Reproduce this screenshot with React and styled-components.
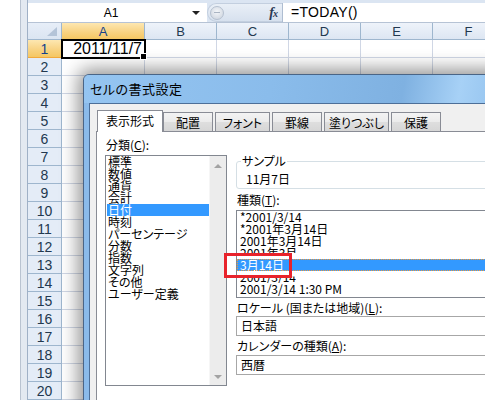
import { Fragment } from 'react';
import styled, { createGlobalStyle, css } from 'styled-components';

const UI_FONT = `"Noto Sans CJK JP", "Liberation Sans", sans-serif`;

const GlobalStyle = createGlobalStyle`
  html, body { margin: 0; padding: 0; background: #fff; }
  body {
    width: 485px;
    height: 410px;
    overflow: hidden;
    font-family: "Liberation Sans", Arial, sans-serif;
  }
  * { box-sizing: border-box; }
`;

const Screen = styled.div`
  position: relative;
  display: flex;
  width: 485px;
  height: 400px;
  overflow: hidden;
`;

const WindowEdge = styled.div`
  flex: none;
  width: 28px;
  background: linear-gradient(
    to right,
    #ffffff 0 20px,
    #b9c3d1 20px 21px,
    #e3e9f1 21px 27px,
    #9fb0c6 27px 28px
  );
`;

const Workbook = styled.div`
  flex: 1;
  min-width: 0;
  display: flex;
  flex-direction: column;
`;

/* formula bar */
const FormulaBar = styled.div`
  display: flex;
  height: 22px;
  padding-top: 3px;
  background: #dbe5f2;
`;

const NameBox = styled.div`
  width: 179px;
  display: flex;
  align-items: center;
  background: #fff;
  padding-right: 7px;
`;

const NameText = styled.span`
  flex: 1;
  text-align: center;
  font-size: 12px;
  color: #000;
  padding-left: 2px;
`;

const DropArrow = styled.span`
  width: 0;
  height: 0;
  border-left: 4px solid transparent;
  border-right: 4px solid transparent;
  border-top: 4px solid #222;
`;

const FxArea = styled.div`
  width: 75px;
  display: flex;
  align-items: center;
  justify-content: space-between;
  padding: 0 5px 0 2px;
  border-radius: 10px 0 0 10px;
  background: linear-gradient(#e9eff7, #d7e1ee);
  border: 1px solid #c3cfdf;
  border-right: none;
`;

const Knob = styled.span`
  width: 14px;
  height: 14px;
  border-radius: 50%;
  background: radial-gradient(circle at 50% 40%, #f4f6f9, #c9d1dc);
  border: 1px solid #b5c0cf;
  position: relative;
  &::after {
    content: '';
    position: absolute;
    left: 3px;
    right: 3px;
    top: 5px;
    height: 1px;
    background: #aab4c2;
  }
`;

const Fx = styled.span`
  font-family: "Liberation Serif", serif;
  font-style: italic;
  font-weight: bold;
  font-size: 14px;
  color: #2a3a55;
  letter-spacing: -1px;
  sub {
    font-size: 10px;
    vertical-align: baseline;
  }
`;

const FormulaInput = styled.div`
  flex: 1;
  background: #fff;
  border-left: 1px solid #aebdd1;
  padding-left: 8px;
  font-size: 14px;
  line-height: 19px;
  color: #000;
  letter-spacing: 0.3px;
`;

const Band = styled.div`
  height: 5px;
  background: #e9eef5;
  border-top: 1px solid #b6c3d5;
`;

/* sheet grid */
const Sheet = styled.div`
  display: grid;
  grid-template-columns: 34px 83px 72px 72px 72px 72px 72px;
  grid-template-rows: 17px;
  grid-auto-rows: 18px;
`;

const headerBase = css`
  display: flex;
  align-items: center;
  justify-content: center;
  font-size: 13px;
  color: #22384f;
  border-right: 1px solid #9eb6ce;
  border-bottom: 1px solid #9eb6ce;
`;

const activeHeader = css`
  background: linear-gradient(#fde7b1, #f8d384 55%, #f5c762);
  color: #15428b;
  border-color: #f2a93b #9eb6ce #f2a93b #9eb6ce;
`;

const Corner = styled.div`
  ${headerBase};
  position: relative;
  background: linear-gradient(#e7eef8, #dbe5f2);
  &::after {
    content: '';
    position: absolute;
    right: 4px;
    bottom: 3px;
    border-left: 10px solid transparent;
    border-bottom: 9px solid #b4c4d8;
  }
`;

const ColHead = styled.div`
  ${headerBase};
  background: linear-gradient(#eef3fa, #dde6f2);
  ${(p) => p.$active && activeHeader};
`;

const RowHead = styled.div`
  ${headerBase};
  font-size: 14px;
  background: #e4ecf7;
  ${(p) => p.$active && activeHeader};
`;

const Cell = styled.div`
  position: relative;
  border-right: 1px solid #d0d7e5;
  border-bottom: 1px solid #d0d7e5;
  font-size: 16px;
  line-height: 18px;
  text-align: right;
  padding-right: 2px;
  color: #000;
  ${(p) =>
    p.$selected &&
    css`
      z-index: 1;
      outline: 2px solid #000;
      outline-offset: -1px;
      &::after {
        content: '';
        position: absolute;
        right: -3px;
        bottom: -3px;
        width: 5px;
        height: 5px;
        background: #000;
        border: 1px solid #fff;
      }
    `};
`;

/* dialog */
const Dialog = styled.div`
  position: absolute;
  left: 83px;
  top: 74px;
  width: 470px;
  height: 380px;
  display: flex;
  flex-direction: column;
  border: 1px solid #4a6586;
  border-radius: 6px 6px 0 0;
  background: #8bbbea;
  box-shadow: 0 0 18px 5px rgba(0, 0, 0, 0.42);
  font-family: ${UI_FONT};
  font-feature-settings: "palt";
`;

const TitleBar = styled.div`
  height: 28px;
  display: flex;
  align-items: center;
  padding: 0 0 2px 6px;
  border-radius: 5px 5px 0 0;
  background: linear-gradient(
    100deg,
    #95c5f1 0%,
    #8abceb 40%,
    #7fb1e1 68%,
    #a7d1f6 80%,
    #8dbeec 92%
  );
  font-size: 13px;
  color: #000;
  letter-spacing: 0.5px;
`;

const Client = styled.div`
  flex: 1;
  margin-left: 5px;
  display: flex;
  flex-direction: column;
  background: #f0f0f0;
  border-left: 1px solid #4d6f98;
  border-top: 1px solid #4d6f98;
  padding: 6px 0 0 7px;
`;

const TabStrip = styled.div`
  display: flex;
  align-items: flex-start;
  height: 22px;
`;

const Tab = styled.div`
  width: ${(p) => p.$w}px;
  margin-left: ${(p) => p.$gap}px;
  display: flex;
  align-items: center;
  justify-content: center;
  font-size: 12px;
  color: #000;
  border: 1px solid #898c95;
  border-bottom: none;
  ${(p) =>
    p.$active
      ? css`
          position: relative;
          z-index: 1;
          height: 22px;
          background: #fff;
          padding-bottom: 2px;
        `
      : css`
          height: 19px;
          margin-top: 2px;
          background: linear-gradient(#f3f3f3, #ebebeb 50%, #dedede 52%, #d6d6d6);
        `};
`;

const Panel = styled.div`
  flex: 1;
  margin: -1px 0 0 -1px;
  background: #fff;
  border: 1px solid #898c95;
  padding: 7px 0 0 8px;
  display: grid;
  grid-template-columns: 122px 1fr;
  column-gap: 9px;
  align-items: start;
`;

const Column = styled.div`
  display: flex;
  flex-direction: column;
  min-width: 0;
`;

const Label = styled.div`
  font-size: 12px;
  line-height: 12px;
  height: 12px;
  color: #000;
  white-space: nowrap;
  margin-top: ${(p) => p.$mt || 0}px;
  padding-left: 1px;
  u {
    text-underline-offset: 1px;
  }
`;

const CategoryList = styled.div`
  margin-top: 4px;
  height: 231px;
  display: flex;
  border: 1px solid #828790;
`;

const Items = styled.div`
  flex: 1;
  display: flex;
  flex-direction: column;
`;

const Item = styled.div`
  height: 12px;
  line-height: 12px;
  font-size: 12px;
  white-space: nowrap;
  color: #000;
  padding-left: 2px;
  ${(p) =>
    p.$selected &&
    css`
      background: #3399ff;
      color: #fff;
    `};
`;

const CategoryItem = styled(Item)`
  margin-left: 1px;
  padding-left: 1px;
`;

const ScrollBar = styled.div`
  width: 17px;
  flex: none;
  display: flex;
  flex-direction: column;
  align-items: center;
  justify-content: space-between;
  padding: 8px 0 6px;
  background: #ececec;
  border-left: 1px solid #f6f6f6;
`;

const ScrollArrow = styled.span`
  width: 0;
  height: 0;
  border-left: 4px solid transparent;
  border-right: 4px solid transparent;
  ${(p) =>
    p.$dir === 'up'
      ? css`border-bottom: 4px solid #a3a3a3;`
      : css`border-top: 4px solid #a3a3a3;`};
`;

const GroupBox = styled.fieldset`
  margin: 16px 0 0;
  padding: 0 0 3px 9px;
  min-width: 0;
  height: 34px;
  border: 1px solid #d5dfe5;
  border-radius: 3px;
  legend {
    margin-left: -5px;
    padding: 0 1px;
    font-size: 12px;
    line-height: 12px;
  }
`;

const Sample = styled.div`
  margin-top: 6px;
  font-size: 12px;
  line-height: 12px;
`;

const TypeList = styled.div`
  position: relative;
  margin-top: 4px;
  height: 88px;
  border: 1px solid #828790;
  display: flex;
  flex-direction: column;
`;

const TypeItem = styled(Item)`
  padding-left: 3px;
  ${(p) =>
    p.$selected &&
    css`
      outline: 1px dotted #f09a3a;
      outline-offset: -1px;
    `};
  span {
    display: inline-block;
    ${(p) => p.$cut === 'bottom' && css`clip-path: inset(0 0 50% 0);`};
    ${(p) => p.$cut === 'top' && css`clip-path: inset(45% 0 0 0);`};
  }
`;

const Callout = styled.div`
  position: absolute;
  left: -13px;
  top: 42px;
  width: 68px;
  height: 25px;
  border: 3px solid #e8232b;
  z-index: 2;
`;

const Select = styled.div`
  margin-top: ${(p) => p.$mt}px;
  height: 20px;
  border: 1px solid #a7a7a7;
  padding-left: 4px;
  font-size: 12px;
  line-height: 18px;
  color: #000;
`;

const cols = ['A', 'B', 'C', 'D', 'E', 'F'];
const rows = Array.from({ length: 20 }, (_, i) => i + 1);

const tabs = [
  { label: '表示形式', w: 66, gap: 0, active: true },
  { label: '配置', w: 50, gap: 0 },
  { label: 'フォント', w: 55, gap: 2 },
  { label: '罫線', w: 50, gap: 2 },
  { label: '塗りつぶし', w: 65, gap: 2 },
  { label: '保護', w: 50, gap: 2 },
];

const categories = [
  '標準', '数値', '通貨', '会計', '日付', '時刻', 'パーセンテージ',
  '分数', '指数', '文字列', 'その他', 'ユーザー定義',
];

const types = [
  { text: '*2001/3/14' },
  { text: '*2001年3月14日' },
  { text: '2001年3月14日' },
  { text: '2001年3月', cut: 'bottom' },
  { text: '3月14日', selected: true },
  { text: '2001/3/14', cut: 'top' },
  { text: '2001/3/14 1:30 PM' },
];

export default function App() {
  return (
    <>
      <GlobalStyle />
      <Screen>
        <WindowEdge />
        <Workbook>
          <FormulaBar>
            <NameBox>
              <NameText>A1</NameText>
              <DropArrow />
            </NameBox>
            <FxArea>
              <Knob />
              <Fx>
                f<sub>x</sub>
              </Fx>
            </FxArea>
            <FormulaInput>=TODAY()</FormulaInput>
          </FormulaBar>
          <Band />
          <Sheet>
            <Corner />
            {cols.map((c) => (
              <ColHead key={c} $active={c === 'A'}>
                {c}
              </ColHead>
            ))}
            {rows.map((r) => (
              <Fragment key={r}>
                <RowHead $active={r === 1}>{r}</RowHead>
                {cols.map((c) => {
                  const sel = r === 1 && c === 'A';
                  return (
                    <Cell key={c} $selected={sel}>
                      {sel ? '2011/11/7' : ''}
                    </Cell>
                  );
                })}
              </Fragment>
            ))}
          </Sheet>
        </Workbook>

        <Dialog>
          <TitleBar>セルの書式設定</TitleBar>
          <Client>
            <TabStrip>
              {tabs.map((t) => (
                <Tab key={t.label} $w={t.w} $gap={t.gap} $active={t.active}>
                  {t.label}
                </Tab>
              ))}
            </TabStrip>
            <Panel>
              <Column>
                <Label>
                  分類(<u>C</u>):
                </Label>
                <CategoryList>
                  <Items>
                    {categories.map((c) => (
                      <CategoryItem key={c} $selected={c === '日付'}>
                        {c}
                      </CategoryItem>
                    ))}
                  </Items>
                  <ScrollBar>
                    <ScrollArrow $dir="up" />
                    <ScrollArrow $dir="down" />
                  </ScrollBar>
                </CategoryList>
              </Column>
              <Column>
                <GroupBox>
                  <legend>サンプル</legend>
                  <Sample>11月7日</Sample>
                </GroupBox>
                <Label $mt={5}>
                  種類(<u>T</u>):
                </Label>
                <TypeList>
                  {types.map((t) => (
                    <TypeItem key={t.text} $selected={t.selected} $cut={t.cut}>
                      <span>{t.text}</span>
                    </TypeItem>
                  ))}
                  <Callout />
                </TypeList>
                <Label $mt={4}>
                  ロケール (国または地域)(<u>L</u>):
                </Label>
                <Select $mt={2}>日本語</Select>
                <Label $mt={4}>
                  カレンダーの種類(<u>A</u>):
                </Label>
                <Select $mt={3}>西暦</Select>
              </Column>
            </Panel>
          </Client>
        </Dialog>
      </Screen>
    </>
  );
}
